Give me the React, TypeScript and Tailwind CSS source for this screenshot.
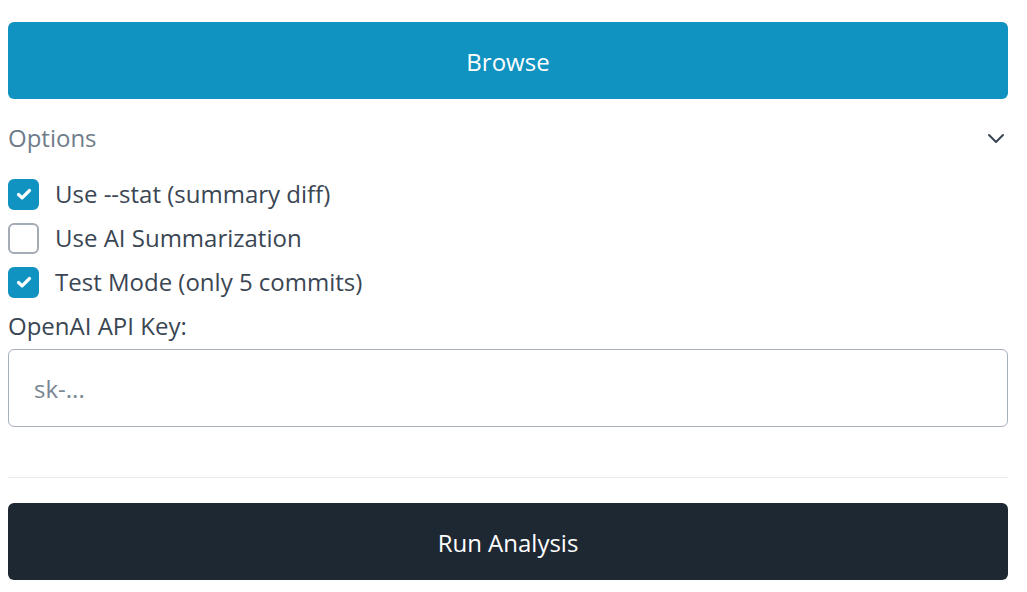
import { useState } from "react";

const FONT = { fontFamily: '"Open Sans", "Noto Sans", sans-serif' };

function Check({ checked, onChange, label }: { checked: boolean; onChange: () => void; label: string }) {
  return (
    <label className="flex items-center h-[44px] cursor-pointer select-none">
      <span
        onClick={onChange}
        className={
          checked
            ? "w-[31px] h-[31px] rounded-[6px] bg-[#1193c1] border-2 border-[#1193c1] flex items-center justify-center shrink-0"
            : "w-[31px] h-[31px] rounded-[6px] bg-white border-2 border-[#a3abb4] flex items-center justify-center shrink-0"
        }
      >
        {checked && (
          <svg viewBox="0 0 20 20" className="w-[20px] h-[20px]" fill="none">
            <path d="M4.5 10.5l3.6 3.4L15.5 6.5" stroke="white" strokeWidth="3.2" strokeLinecap="round" strokeLinejoin="round" />
          </svg>
        )}
      </span>
      <span className="ml-[16px] text-[24px] text-[#3a4653]">{label}</span>
    </label>
  );
}

export default function App() {
  const [stat, setStat] = useState(true);
  const [ai, setAi] = useState(false);
  const [test, setTest] = useState(true);

  return (
    <div className="bg-white min-h-[592px] px-[8px] pt-[22px] pb-[12px] w-[1027px] pr-[19px]" style={FONT}>
      <button className="w-full h-[77px] rounded-[6px] bg-[#1193c1] text-white text-[24px] pt-[2px]">Browse</button>

      {/* Options */}
      <div className="flex items-center justify-between h-[40px] mt-[19px]">
        <span className="text-[24px] text-[#6f7d8b]">Options</span>
        <svg viewBox="0 0 20 20" className="w-[20px] h-[20px] mr-[2px]" fill="none">
          <path d="M3 7l7 7 7-7" stroke="#3a4653" strokeWidth="2" strokeLinecap="round" strokeLinejoin="round" />
        </svg>
      </div>

      <div className="mt-[14px] flex flex-col">
        <Check checked={stat} onChange={() => setStat(!stat)} label="Use --stat (summary diff)" />
        <Check checked={ai} onChange={() => setAi(!ai)} label="Use AI Summarization" />
        <Check checked={test} onChange={() => setTest(!test)} label="Test Mode (only 5 commits)" />
      </div>

      <div className="mt-[2px] text-[24px] text-[#3a4653] h-[40px] leading-[40px]">OpenAI API Key:</div>
      <input
        placeholder="sk-..."
        className="mt-[3px] w-full h-[78px] rounded-[6px] border border-[#a8b1ba] px-[25px] text-[24px] text-[#3a4653] placeholder:text-[#7a8692] outline-none"
      />

      <div className="mt-[50px] border-t border-[#e8ebee]" />

      <button className="mt-[25px] w-full h-[77px] rounded-[6px] bg-[#1e2832] text-white text-[24px] pt-[2px]">Run Analysis</button>
    </div>
  );
}
